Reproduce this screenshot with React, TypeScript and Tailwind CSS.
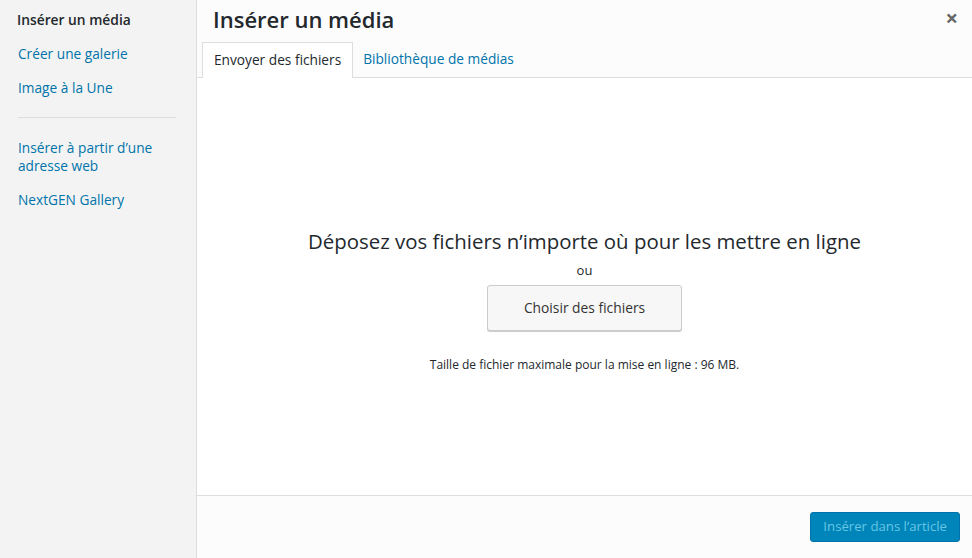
export default function App() {
  return (
    <div className="flex h-[558px] w-[972px] overflow-hidden bg-white font-['Open_Sans',sans-serif] text-[#23282d]">
      <aside className="w-[197px] shrink-0 border-r border-[#dddddd] bg-[#f3f3f3] pt-[9px]">
        <div className="px-[17px] py-[1px] text-[13.8px] font-semibold leading-[20px]">Insérer un média</div>
        <div className="mt-[13px] px-[18px] text-[13.7px] leading-[20px] text-[#0073aa]">Créer une galerie</div>
        <div className="mt-[14px] px-[18px] text-[13.7px] leading-[20px] text-[#0073aa]">Image à la Une</div>
        <div className="mx-[18px] mt-[19px] h-px w-[158px] bg-[#dddddd]" />
        <div className="mt-[21px] px-[18px] text-[13.7px] leading-[18px] text-[#0073aa]">
          Insérer à partir d’une
          <br />
          adresse web
        </div>
        <div className="mt-[15px] px-[18px] text-[13.7px] leading-[20px] text-[#0073aa]">NextGEN Gallery</div>
      </aside>
      <main className="flex flex-1 flex-col">
        <div className="bg-[#fcfcfc]">
          <div className="flex h-[42px] items-start justify-between pl-[16px] pr-[14px]">
            <h1 className="pt-[4px] text-[22px] font-semibold leading-[30px]">Insérer un média</h1>
            <span className="pt-[6px] text-[22px] font-bold leading-[22px] text-[#666666]">×</span>
          </div>
          <div className="flex h-[36px] items-end border-b border-[#dddddd] pl-[5px]">
            <div className="-mb-px flex h-[36px] items-center border border-b-0 border-[#dddddd] bg-white px-[11px] text-[13.7px]">
              Envoyer des fichiers
            </div>
            <div className="flex h-[35px] items-center px-[10px] text-[13.7px] text-[#0073aa]">Bibliothèque de médias</div>
          </div>
        </div>
        <div className="flex flex-1 flex-col items-center bg-white pt-[149px]">
          <p className="text-[20.4px] leading-[28px]">Déposez vos fichiers n’importe où pour les mettre en ligne</p>
          <p className="mt-[8px] text-[13px] leading-[14px]">ou</p>
          <button className="mt-[8px] h-[46px] w-[195px] rounded-[3px] border border-[#cccccc] bg-[#f7f7f7] text-[13.8px] text-[#333333] shadow-[0_1px_0_#cccccc]">
            Choisir des fichiers
          </button>
          <p className="mt-[26px] text-[12px] leading-[16px]">Taille de fichier maximale pour la mise en ligne : 96 MB.</p>
        </div>
        <div className="flex h-[63px] shrink-0 items-center justify-end border-t border-[#dddddd] bg-[#fcfcfc] pr-[12px]">
          <button className="h-[30px] rounded-[3px] border border-[#0073aa] bg-[#0085ba] px-[12px] text-[13.2px] text-[#66c6e4]">
            Insérer dans l’article
          </button>
        </div>
      </main>
    </div>
  );
}
